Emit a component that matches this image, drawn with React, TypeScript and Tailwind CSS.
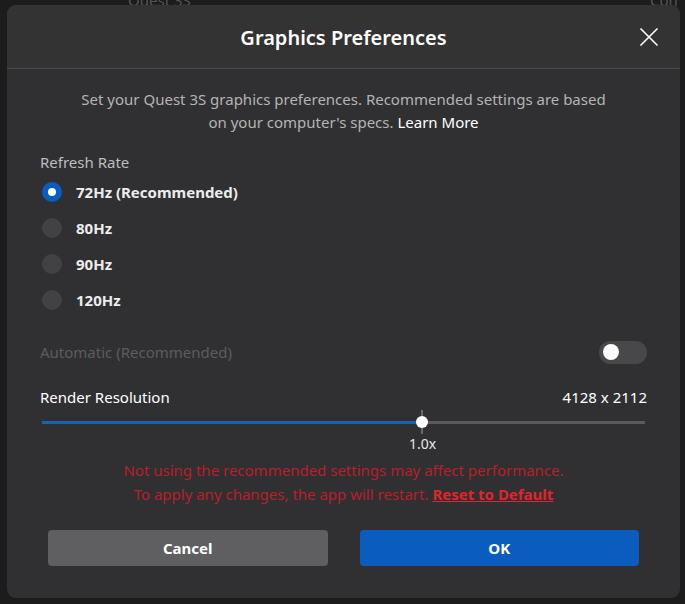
import React from "react";

const font = { fontFamily: '"Noto Sans", "Open Sans", sans-serif' };

function Radio({ label, checked }: { label: string; checked?: boolean }) {
  return (
    <div className="flex h-[36px] items-center">
      <div
        className={
          "ml-[2px] flex h-[20px] w-[20px] items-center justify-center rounded-full " +
          (checked ? "bg-[#0b5cc0]" : "bg-[#424245]")
        }
      >
        {checked && <div className="h-[8px] w-[8px] rounded-full bg-white" />}
      </div>
      <span className="ml-[14px] text-[15px] font-bold text-[#ececec]">{label}</span>
    </div>
  );
}

export default function App() {
  return (
    <div
      className="relative h-[604px] w-[685px] overflow-hidden bg-[#1c1c1c] pl-[7px] pr-[5px] pt-[5px]"
      style={font}
    >
      {/* background app peeking above the dialog */}
      <div className="absolute left-[128px] top-[-11px] text-[15px] text-[#555]">Quest 3S</div>
      <div className="absolute left-[650px] top-[-11px] text-[15px] text-[#555]">Con</div>

      <div className="relative h-[593px] w-[673px] overflow-hidden rounded-[9px] bg-[#303033]">
        {/* Header */}
        <div className="relative flex h-[64px] items-center justify-center border-b border-[#4a4a4c] bg-[#333333] pt-[2px]">
          <h1 className="text-[20px] font-semibold text-white">Graphics Preferences</h1>
          <button className="absolute right-[21px] top-[22px] text-white">
            <svg width="20" height="20" viewBox="0 0 20 20" fill="none" stroke="currentColor" strokeWidth="1.6">
              <path d="M1.5 1.5 L18.5 18.5 M18.5 1.5 L1.5 18.5" />
            </svg>
          </button>
        </div>

        {/* Body */}
        <div className="px-[33px] pt-[19px]">
          <p className="text-center text-[15px] leading-[23px] text-[#b4b4b4]">
            Set your Quest 3S graphics preferences. Recommended settings are based
            <br />
            on your computer's specs. <span className="text-white">Learn More</span>
          </p>

          <div className="mt-[17px] text-[15px] leading-[23px] text-[#bdbdbd]">Refresh Rate</div>
          <div className="flex flex-col">
            <Radio label="72Hz (Recommended)" checked />
            <Radio label="80Hz" />
            <Radio label="90Hz" />
            <Radio label="120Hz" />
          </div>

          {/* Automatic */}
          <div className="mt-[22px] flex h-[24px] items-center justify-between">
            <span className="text-[15px] text-[#5c5c5e]">Automatic (Recommended)</span>
            <div className="flex h-[23px] w-[48px] items-center rounded-full bg-[#48484b] pl-[4px]">
              <div className="h-[16px] w-[16px] rounded-full bg-white" />
            </div>
          </div>

          {/* Render Resolution */}
          <div className="mt-[22px] flex items-center justify-between text-[15px] leading-[23px] text-white">
            <span>Render Resolution</span>
            <span>4128 x 2112</span>
          </div>

          <div className="relative mx-[2px] mt-[1px] h-[24px]">
            <div className="absolute left-0 right-0 top-[11px] h-[3px] bg-[#5a5a5c]" />
            <div className="absolute left-0 top-[11px] h-[3px] w-[63.1%] bg-[#1a63b3]" />
            <div className="absolute left-[63.1%] top-0 h-[24px] w-[2px] -translate-x-1/2 bg-[#6a6a6c]" />
            <div className="absolute left-[63.1%] top-[6px] h-[12px] w-[12px] -translate-x-1/2 rounded-full bg-white" />
          </div>
          <div className="relative mx-[2px] h-[20px]">
            <span className="absolute left-[63.1%] top-0 -translate-x-1/2 text-[14px] leading-[20px] text-[#e6e6e6]">
              1.0x
            </span>
          </div>

          <p className="mt-[4px] text-center text-[15px] leading-[24px] text-[#b81f28]">
            Not using the recommended settings may affect performance.
            <br />
            To apply any changes, the app will restart.{" "}
            <span className="font-bold text-[#e0242c] underline">Reset to Default</span>
          </p>

          <div className="mt-[24px] flex gap-[32px] px-[8px]">
            <button className="h-[36px] w-[280px] rounded-[4px] bg-[#5f5f61] text-[15px] font-bold text-white">
              Cancel
            </button>
            <button className="h-[36px] w-[280px] rounded-[4px] bg-[#0b5cbf] text-[15px] font-bold text-white">
              OK
            </button>
          </div>
        </div>
      </div>
    </div>
  );
}
